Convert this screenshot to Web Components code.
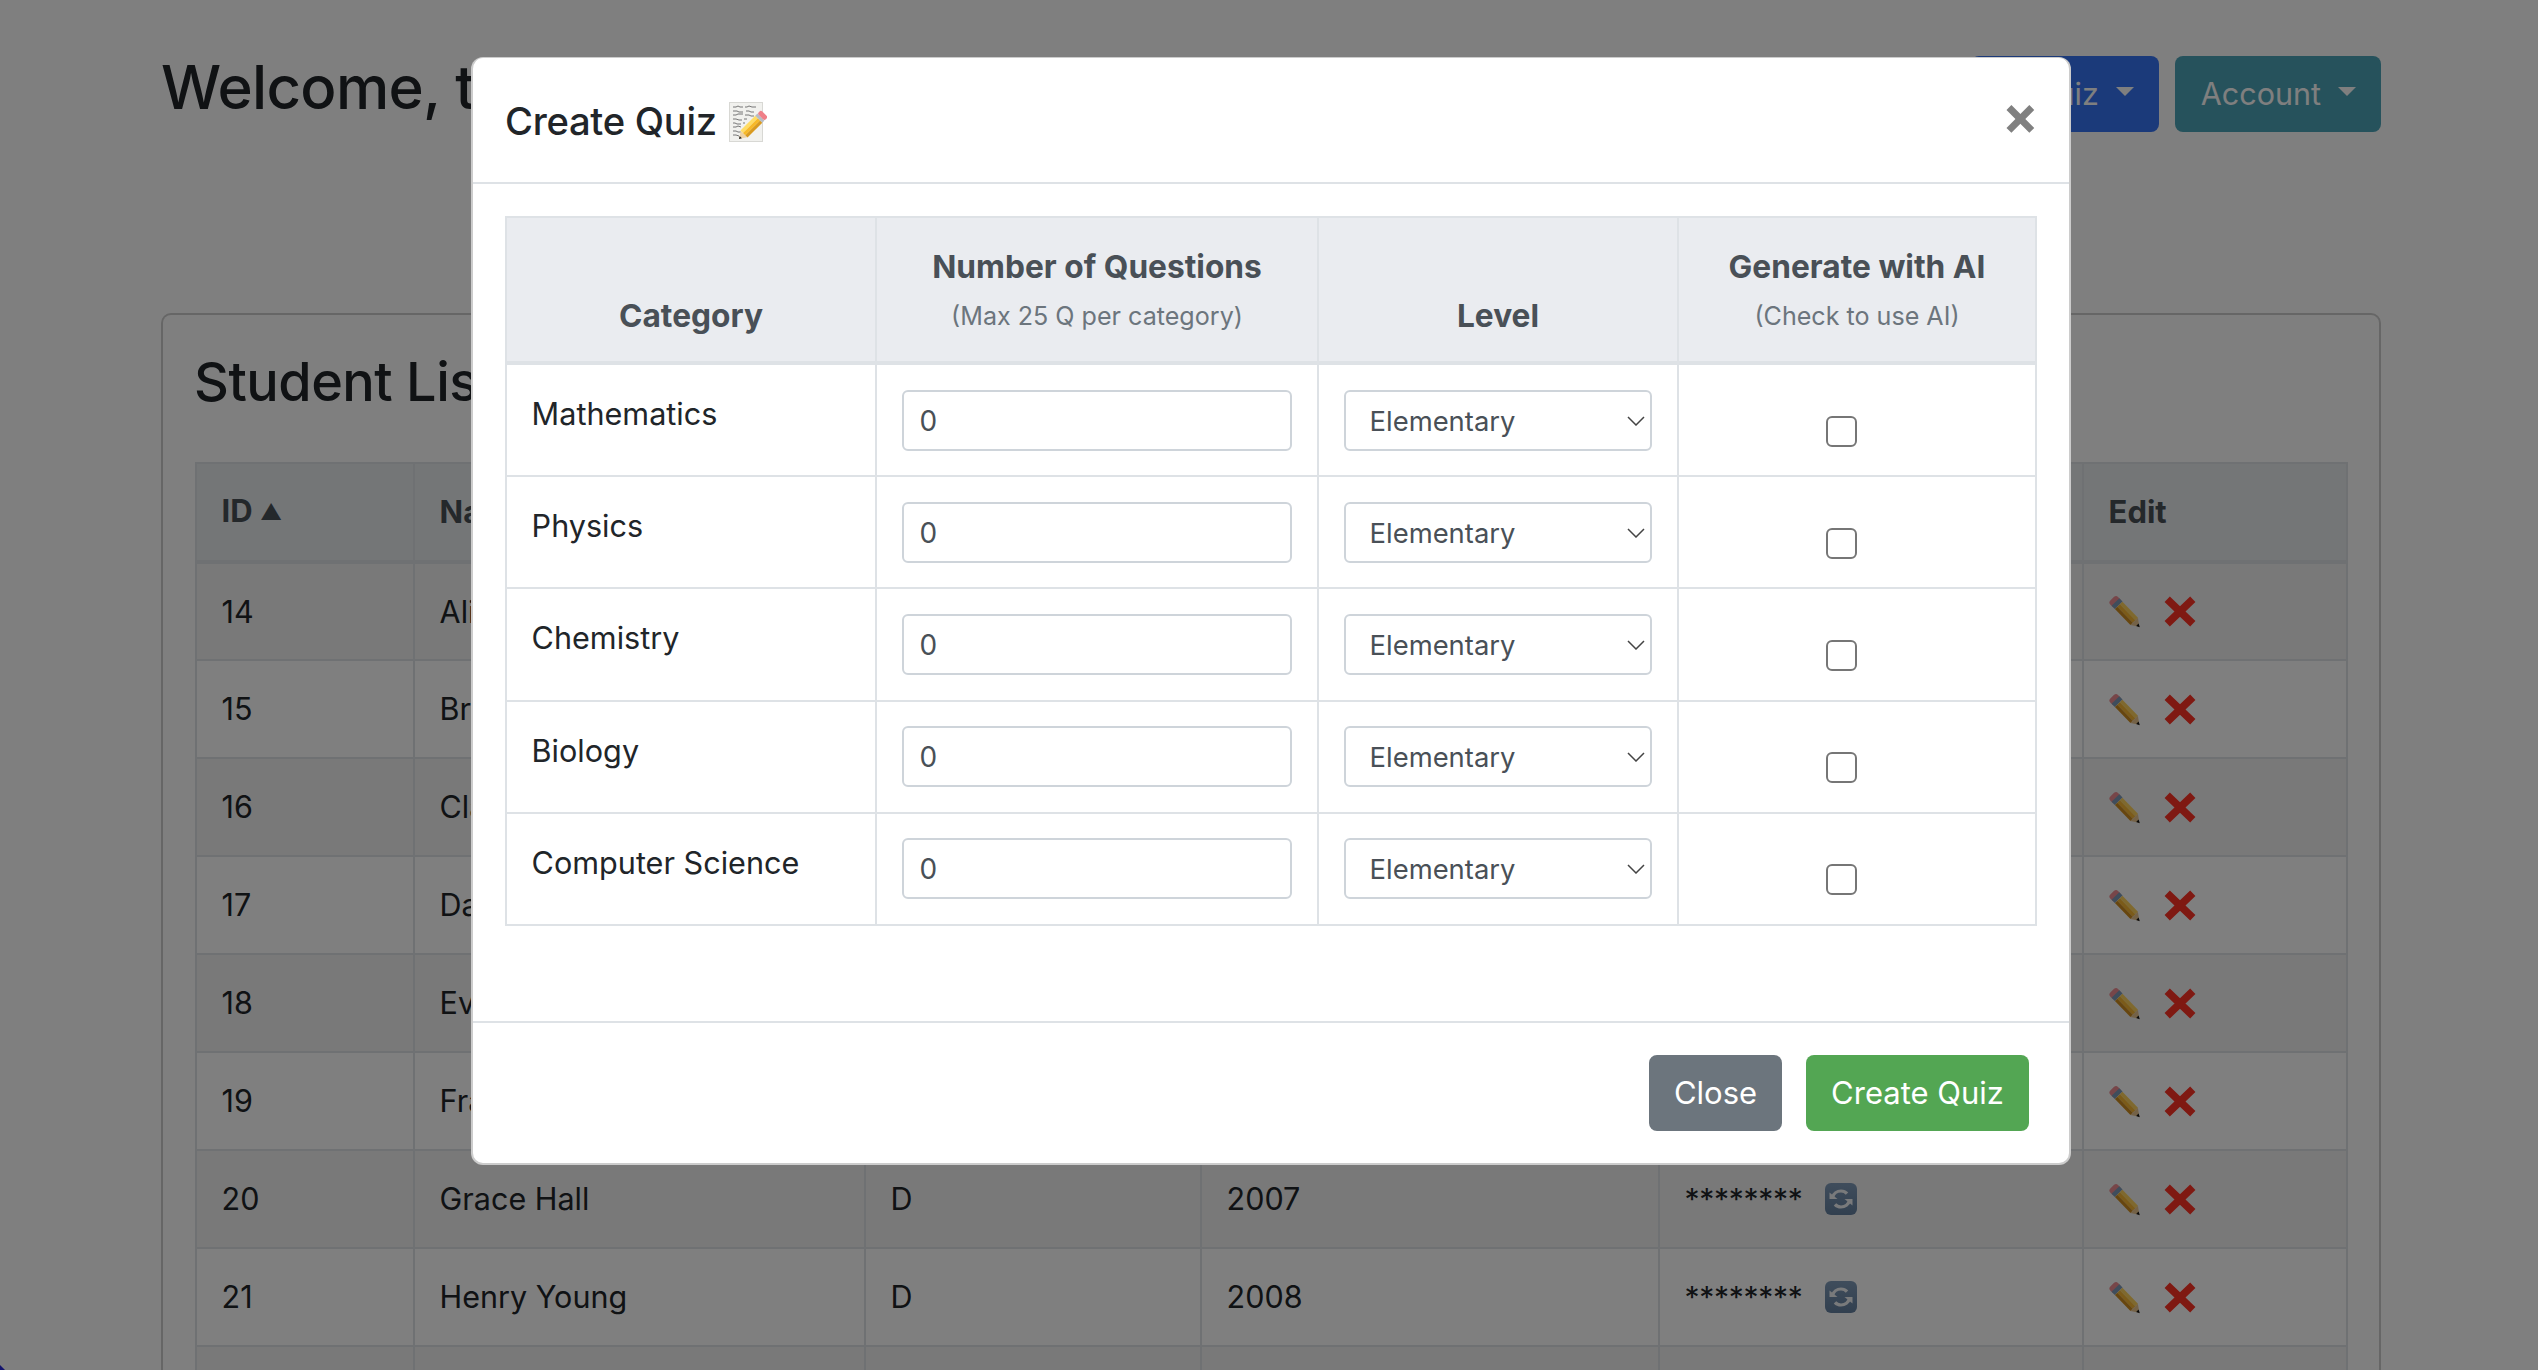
<!DOCTYPE html>
<html lang="en"><head><meta charset="utf-8"><title>Students</title>
<style>
html,body{margin:0;padding:0;height:100%;overflow:hidden;background:#fff;font-family:Inter,"Liberation Sans",sans-serif;color:#212529}
</style></head>
<body>
<app-shell>
  <page-top slot="top" heading="Welcome, teacher!">
    <nav-button color="#3674f4" style="width:188px" label="+ Quiz"></nav-button>
    <nav-button color="#4ca4b8" label="Account"></nav-button>
  </page-top>
  <student-card slot="main" heading="Student List"></student-card>
  <quiz-modal slot="modal"></quiz-modal>
</app-shell>
<script>
function def(name, html, init){
  customElements.define(name, class extends HTMLElement{
    connectedCallback(){
      if(this.shadowRoot) return;
      const r=this.attachShadow({mode:'open'});
      r.innerHTML = typeof html==='function' ? html(this) : html;
      if(init) init(this,r);
    }
  });
}
def('icon-pencil',`<style>:host{display:inline-block;width:31px;height:31px;line-height:0}svg{display:block;overflow:visible}</style>
<svg width="31" height="31" viewBox="0 0 31 31"><g transform="translate(4.5,4) rotate(46) scale(.93)">
<rect x="-2" y="-5.8" width="9" height="11.6" rx="3" fill="#ee8c93"/>
<rect x="3" y="-5.8" width="5" height="11.6" fill="#7f9ab8"/>
<rect x="8" y="-5.6" width="24" height="3.8" fill="#ffd35c"/>
<rect x="8" y="-1.8" width="24" height="3.8" fill="#f6b632"/>
<rect x="8" y="2" width="24" height="3.6" fill="#cf8c1e"/>
<path d="M32-5.6 40 0 32 5.6Z" fill="#e9c48e"/><path d="M37 -1.8 40.6 0 37 1.8Z" fill="#111"/></g></svg>`);
def('icon-cross',`<style>:host{display:inline-block;width:32px;height:31px;line-height:0}svg{display:block}</style>
<svg width="32" height="31" viewBox="0 0 32 31"><path d="M3.2 3.2 28.8 27.8M28.8 3.2 3.2 27.8" stroke="#ff3224" stroke-width="7.6" fill="none"/></svg>`);
def('icon-refresh',`<style>:host{display:inline-block;width:32px;height:32px;line-height:0}svg{display:block}</style>
<svg width="32" height="32" viewBox="0 0 32 32"><defs><linearGradient id="g" x1="0" y1="0" x2="0" y2="1"><stop offset="0" stop-color="#7f9ab8"/><stop offset="1" stop-color="#64809f"/></linearGradient></defs>
<rect width="32" height="32" rx="6" fill="url(#g)"/>
<path d="M7.5 14.5C8.5 10.5 12 8 16 8c2.6 0 4.6 1 6 2.6" fill="none" stroke="#f2f4f7" stroke-width="3.2"/><path d="M4.5 10.5 12.5 17H4.5Z" fill="#f2f4f7" transform="translate(0,-1)"/>
<path d="M24.5 17.5C23.5 21.5 20 24 16 24c-2.6 0-4.6-1-6-2.6" fill="none" stroke="#f2f4f7" stroke-width="3.2"/><path d="M27.5 21.5 19.5 15H27.5Z" fill="#f2f4f7" transform="translate(0,1)"/></svg>`);
def('icon-memo',`<style>:host{display:inline-block;width:38px;height:40px;line-height:0;vertical-align:-7px;margin-left:2px}svg{display:block}</style>
<svg width="38" height="40" viewBox="0 0 38 40"><rect x=".5" y=".5" width="33" height="39" fill="#f1f1ee" stroke="#d8d8d4"/>
<g stroke="#6a6a6a" stroke-width=".9" fill="none"><path d="M4 5h3l2-1 2 1h3M16 5h2l2-1 3 1h4"/><path d="M4 9h4l2 1h4M17 9h3l2 1h3"/><path d="M4 13h3l2-1h5M16 13h4l2 1h3"/><path d="M4 17h3l3 1h3M15 17h3"/><path d="M4 21h2l2 1h4M14 21h2"/><path d="M4 25h3l2-1 3 1"/><path d="M4 29h3l2 1h3"/><path d="M4 33h3l3 1"/></g>
<g transform="translate(10,37) rotate(-45)"><path d="M0 0 7 -4.5V4.5Z" fill="#edd2a6"/><path d="M0 0 2.5-1.6V1.6Z" fill="#222"/><rect x="7" y="-5" width="21" height="3.6" fill="#ffdc63"/><rect x="7" y="-1.4" width="21" height="3.2" fill="#f7b928"/><rect x="7" y="1.8" width="21" height="3.2" fill="#d99a1f"/><rect x="28" y="-5" width="3" height="10" fill="#b7bcc4"/><rect x="31" y="-5" width="5" height="10" rx="2" fill="#ef7f88"/></g></svg>`);

def('nav-button',h=>`<style>:host{display:inline-flex;box-sizing:border-box;height:76px;align-items:center;justify-content:flex-end;padding:0 25px 0 26px;border-radius:8px;background:${h.getAttribute('color')};color:#fff;font:30.5px/46px Inter,"Liberation Sans",sans-serif;white-space:nowrap}
i{display:inline-block;margin-left:17px;margin-top:-6px;border:9px solid transparent;border-top-color:#fff;border-bottom:0;width:0;height:0}</style><span>${h.getAttribute('label')}</span><i></i>`);

def('page-top',h=>`<style>:host{display:flex;justify-content:space-between;align-items:flex-start}
h1{margin:0;font:500 60px/62px Inter,"Liberation Sans",sans-serif;letter-spacing:-.7px}
div{display:flex;gap:16px}</style><h1>${h.getAttribute('heading')}</h1><div><slot></slot></div>`);

const students=[[14,'Alice Brown','A','2008'],[15,'Bruce Clark','B','2007'],[16,'Clara Davis','C','2008'],[17,'David Evans','A','2007'],[18,'Eva Foster','B','2008'],[19,'Frank Green','C','2007'],[20,'Grace Hall','D','2007'],[21,'Henry Young','D','2008']];
def('student-card',h=>`<style>:host{display:block;box-sizing:border-box;margin-top:181px;height:1300px;border:2px solid #ccc;border-bottom:0;border-radius:10px;padding:32px;background:#fff}
h2{margin:0 0 46px -1px;font:500 54px/69px Inter,"Liberation Sans",sans-serif;letter-spacing:-.5px}
table{border-collapse:collapse;table-layout:fixed;width:2151px;font-size:30.5px;line-height:46px}
th,td{border:2px solid #dee2e6;padding:0 24.6px;height:98px;box-sizing:border-box;text-align:left;vertical-align:middle}
th{background:#e9ecef;color:#495057;font-weight:700;height:99px;border-bottom-width:4px;font-size:31px}
th b{font-size:22px;font-weight:400;position:relative;top:-2px}
tr:nth-child(odd) td{background:#f2f2f2}
.pw{display:flex;align-items:center}.pw span{font-size:30px;letter-spacing:-.3px;width:140.5px}
.ac{display:flex;align-items:center;gap:24px}
</style><h2>${h.getAttribute('heading')}</h2>
<table><colgroup><col style="width:218px"><col style="width:451px"><col style="width:336px"><col style="width:458px"><col style="width:424px"><col style="width:264px"></colgroup>
<thead><tr><th>ID <b>▲</b></th><th>Name</th><th>Class</th><th>Year</th><th>Password</th><th>Edit</th></tr></thead>
<tbody>${students.map(s=>`<tr><td>${s[0]}</td><td>${s[1]}</td><td>${s[2]}</td><td>${s[3]}</td><td><div class="pw"><span>********</span><icon-refresh></icon-refresh></div></td><td><div class="ac"><icon-pencil></icon-pencil><icon-cross></icon-cross></div></td></tr>`).join('')}<tr><td></td><td></td><td></td><td></td><td></td><td></td></tr></tbody></table>`);

const cats=['Mathematics','Physics','Chemistry','Biology','Computer Science'];
def('quiz-modal',`<style>
:host{display:block;position:absolute;left:471px;top:57px;width:1600px;box-sizing:border-box;border:2px solid rgba(0,0,0,.2);border-top-width:1px;background-clip:padding-box;border-radius:12px;background:#fff;color:#212529}
header{display:flex;justify-content:space-between;align-items:flex-start;height:126px;box-sizing:border-box;padding:35px 32px 0;border-bottom:2px solid #dee2e6}
h5{margin:0;font:500 38.2px/56px Inter,"Liberation Sans",sans-serif;letter-spacing:-.3px}
.x{font:700 54px/40px Inter,"Liberation Sans",sans-serif;color:#808080;width:36px;text-align:center;margin:2px 0 0;padding:0;border:0;background:none;position:relative;left:1px}
main{padding:32px 32px 95px}
table{border-collapse:collapse;table-layout:fixed;width:1530px;font-size:30.6px;line-height:46px}
th,td{border:2px solid #dee2e6;padding:24.6px;box-sizing:border-box;vertical-align:top}
td:first-child{padding-top:26px}
thead th{background:#eaecf0;color:#495057;font-weight:700;font-size:31.7px;text-align:center;vertical-align:bottom;border-bottom-width:4px;height:146px}
thead th.s{padding-bottom:22.5px}
th small{display:block;font-size:25.1px;font-weight:400;color:#6c757d;line-height:46px;position:relative;top:3px}
td{height:112px}
input.n,select{display:block;width:100%;box-sizing:border-box;height:61px;border:2px solid #ced4da;border-radius:6px;background:#fff;color:#495057;font:27.4px Inter,"Liberation Sans",sans-serif;margin:0;outline:0}
input.n{padding:1px 16px 0;font-size:28px}
select{appearance:none;-webkit-appearance:none;padding:1px 0 0 24px}
.sel{position:relative}
.sel svg{position:absolute;right:7px;top:26px}
input.c{appearance:none;-webkit-appearance:none;display:block;width:31px;height:31px;margin:26px 0 0 122px;border:2px solid #767676;border-radius:6px;background:#fff;box-sizing:border-box}
footer{display:flex;justify-content:flex-end;padding:32px 40px 32px 32px;gap:24px;border-top:2px solid #dee2e6}
button.b{height:76px;border:0;border-radius:8px;color:#fff;font:31px Inter,"Liberation Sans",sans-serif;padding:0 25px}
</style>
<header><h5>Create Quiz <icon-memo></icon-memo></h5><button class="x">×</button></header>
<main><table><colgroup><col style="width:370px"><col style="width:442px"><col style="width:360px"><col style="width:358px"></colgroup>
<thead><tr><th class="s">Category</th><th>Number of Questions<small>(Max 25 Q per category)</small></th><th class="s">Level</th><th>Generate with AI<small>(Check to use AI)</small></th></tr></thead>
<tbody>${cats.map(c=>`<tr><td>${c}</td><td><input class="n" type="text" value="0"></td><td><div class="sel"><select><option>Elementary</option></select><svg width="18" height="10" viewBox="0 0 18 10"><path d="M1 1 9 9 17 1" fill="none" stroke="#444" stroke-width="1.5"/></svg></div></td><td><input class="c" type="checkbox"></td></tr>`).join('')}</tbody></table></main>
<footer><button class="b" style="background:#6c757d">Close</button><button class="b" style="background:#53a653">Create Quiz</button></footer>`);

def('modal-backdrop',`<style>:host{display:block;position:absolute;inset:0;background:rgba(0,0,0,.5)}</style>`);
def('app-shell',`<style>:host{display:block;position:relative;width:2538px;height:1370px;overflow:hidden;background:#fff}
.p{padding:56px 157px 0 161px}
.corner{position:absolute;left:0;bottom:0;width:5px;height:5px;background:#14146e;clip-path:polygon(0 0,100% 100%,0 100%)}
</style><div class="p"><slot name="top"></slot><slot name="main"></slot></div><modal-backdrop></modal-backdrop><slot name="modal"></slot><div class="corner"></div>`);
</script>
</body></html>
